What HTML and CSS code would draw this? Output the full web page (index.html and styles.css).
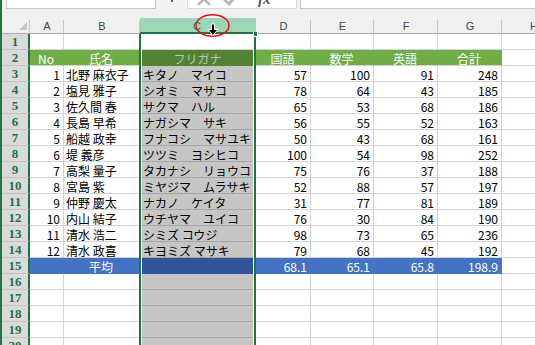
FILE: index.html
```html
<!DOCTYPE html>
<html lang="ja">
<head>
  <meta charset="UTF-8" />
  <meta name="viewport" content="width=device-width, initial-scale=1.0"/>
  <title>成績一覧</title>
  <link rel="stylesheet" href="styles.css">
</head>
<body>

  <div class="formula-bar">
    <div class="name-box">C1</div>
    <span class="bar-grip"></span>
    <div class="bar-buttons">
      <svg class="bar-icon" width="16" height="16" viewBox="0 0 16 16"><path d="M2 2 L14 14 M14 2 L2 14" stroke="#b4b4b4" stroke-width="2.4" fill="none"/></svg>
      <svg class="bar-icon" width="16" height="16" viewBox="0 0 16 16"><path d="M1 8 L6 13 L15 3" stroke="#b4b4b4" stroke-width="2.8" fill="none"/></svg>
      <span class="fx">fx</span>
    </div>
    <div class="formula-input"></div>
  </div>

  <div class="sheet-wrap">
    <div class="sheet">
      <!-- column headers -->
      <div class="corner"></div>
      <div class="ch">A</div><div class="ch">B</div><div class="ch ch-sel">C</div><div class="ch">D</div>
      <div class="ch">E</div><div class="ch">F</div><div class="ch">G</div><div class="ch">H</div>

      <div class="rh">1</div>
      <div class="c"></div><div class="c"></div><div class="c active"></div><div class="c"></div><div class="c"></div><div class="c"></div><div class="c"></div><div class="c"></div>

      <div class="rh">2</div>
      <div class="c hd">No</div><div class="c hd">氏名</div><div class="c hd sel">フリガナ</div><div class="c hd">国語</div><div class="c hd">数学</div><div class="c hd">英語</div><div class="c hd">合計</div><div class="c"></div>

      <div class="rh">3</div>
      <div class="c num">1</div><div class="c">北野 麻衣子</div><div class="c sel">キタノ　マイコ</div><div class="c num">57</div><div class="c num">100</div><div class="c num">91</div><div class="c num">248</div><div class="c"></div>

      <div class="rh">4</div>
      <div class="c num">2</div><div class="c">塩見 雅子</div><div class="c sel">シオミ　マサコ</div><div class="c num">78</div><div class="c num">64</div><div class="c num">43</div><div class="c num">185</div><div class="c"></div>

      <div class="rh">5</div>
      <div class="c num">3</div><div class="c">佐久間 春</div><div class="c sel">サクマ　ハル</div><div class="c num">65</div><div class="c num">53</div><div class="c num">68</div><div class="c num">186</div><div class="c"></div>

      <div class="rh">6</div>
      <div class="c num">4</div><div class="c">長島 早希</div><div class="c sel">ナガシマ　サキ</div><div class="c num">56</div><div class="c num">55</div><div class="c num">52</div><div class="c num">163</div><div class="c"></div>

      <div class="rh">7</div>
      <div class="c num">5</div><div class="c">船越 政幸</div><div class="c sel">フナコシ　マサユキ</div><div class="c num">50</div><div class="c num">43</div><div class="c num">68</div><div class="c num">161</div><div class="c"></div>

      <div class="rh">8</div>
      <div class="c num">6</div><div class="c">堤 義彦</div><div class="c sel">ツツミ　ヨシヒコ</div><div class="c num">100</div><div class="c num">54</div><div class="c num">98</div><div class="c num">252</div><div class="c"></div>

      <div class="rh">9</div>
      <div class="c num">7</div><div class="c">高梨 量子</div><div class="c sel">タカナシ　リョウコ</div><div class="c num">75</div><div class="c num">76</div><div class="c num">37</div><div class="c num">188</div><div class="c"></div>

      <div class="rh">10</div>
      <div class="c num">8</div><div class="c">宮島 紫</div><div class="c sel">ミヤジマ　ムラサキ</div><div class="c num">52</div><div class="c num">88</div><div class="c num">57</div><div class="c num">197</div><div class="c"></div>

      <div class="rh">11</div>
      <div class="c num">9</div><div class="c">仲野 慶太</div><div class="c sel">ナカノ　ケイタ</div><div class="c num">31</div><div class="c num">77</div><div class="c num">81</div><div class="c num">189</div><div class="c"></div>

      <div class="rh">12</div>
      <div class="c num">10</div><div class="c">内山 結子</div><div class="c sel">ウチヤマ　ユイコ</div><div class="c num">76</div><div class="c num">30</div><div class="c num">84</div><div class="c num">190</div><div class="c"></div>

      <div class="rh">13</div>
      <div class="c num">11</div><div class="c">清水 浩二</div><div class="c sel">シミズ コウジ</div><div class="c num">98</div><div class="c num">73</div><div class="c num">65</div><div class="c num">236</div><div class="c"></div>

      <div class="rh">14</div>
      <div class="c num">12</div><div class="c">清水 政喜</div><div class="c sel">キヨミズ マサキ</div><div class="c num">79</div><div class="c num">68</div><div class="c num">45</div><div class="c num">192</div><div class="c"></div>

      <div class="rh">15</div>
      <div class="c avg"></div><div class="c avg ctr">平均</div><div class="c avg sel"></div><div class="c avg num">68.1</div><div class="c avg num">65.1</div><div class="c avg num">65.8</div><div class="c avg num">198.9</div><div class="c"></div>

      <div class="rh">16</div>
      <div class="c"></div><div class="c"></div><div class="c sel"></div><div class="c"></div><div class="c"></div><div class="c"></div><div class="c"></div><div class="c"></div>
      <div class="rh">17</div>
      <div class="c"></div><div class="c"></div><div class="c sel"></div><div class="c"></div><div class="c"></div><div class="c"></div><div class="c"></div><div class="c"></div>
      <div class="rh">18</div>
      <div class="c"></div><div class="c"></div><div class="c sel"></div><div class="c"></div><div class="c"></div><div class="c"></div><div class="c"></div><div class="c"></div>
      <div class="rh">19</div>
      <div class="c"></div><div class="c"></div><div class="c sel"></div><div class="c"></div><div class="c"></div><div class="c"></div><div class="c"></div><div class="c"></div>
      <div class="rh">20</div>
      <div class="c"></div><div class="c"></div><div class="c sel"></div><div class="c"></div><div class="c"></div><div class="c"></div><div class="c"></div><div class="c"></div>
    </div>

    <!-- whole-column selection frame -->
    <div class="col-select"><span class="fill-handle"></span></div>
  </div>

  <!-- red ring and the column-select pointer -->
  <svg class="ring" width="38" height="26" viewBox="0 0 38 26">
    <ellipse cx="18.5" cy="12.5" rx="16.5" ry="10.8" fill="none" stroke="#e8100e" stroke-width="1.4"/>
  </svg>
  <svg class="pointer" width="12" height="14" viewBox="0 0 12 14">
    <path d="M4.5 1 H7.5 V6.5 H11 L6 12.5 L1 6.5 H4.5 Z" fill="#000" stroke="#fff" stroke-width="1"/>
  </svg>

</body>
</html>
```

FILE: styles.css
```css
body {
    margin: 0;
    width: 535px;
    height: 345px;
    overflow: hidden;
    box-sizing: border-box;
    border-left: 2px solid #217346;
    background-color: #f0f0f0;
    font-family: "Noto Sans CJK JP", sans-serif;
    font-size: 12px;
    color: #000;
}

/* formula bar, only its lower edge shows */
.formula-bar {
    display: flex;
    align-items: flex-end;
    height: 9px;
    overflow: hidden;
    background-color: #f3f3f3;
}

.name-box,
.bar-buttons,
.formula-input {
    box-sizing: border-box;
    height: 20px;
    flex-shrink: 0;
    background-color: #fff;
    border: 1px solid #c6c6c6;
}

.name-box {
    width: 150px;
    margin-left: 4px;
    padding: 0 0 0 5px;
    font-family: "Liberation Sans", sans-serif;
    line-height: 12px;
    color: #333;
}

.bar-grip {
    align-self: flex-start;
    width: 2px;
    height: 2px;
    margin-left: 15px;
    background-color: #6a6a6a;
}

.bar-buttons {
    width: 110px;
    margin-left: 14px;
    display: flex;
    align-items: center;
    gap: 11px;
    padding-left: 8px;
    border-color: #d8d8d8;
}

.fx {
    font-family: "Liberation Serif", serif;
    font-style: italic;
    font-weight: bold;
    font-size: 15px;
    color: #555;
    margin-left: 8px;
}

.formula-input {
    flex-grow: 1;
    margin-left: 3px;
    margin-right: -4px;
}

/* worksheet grid */
.sheet-wrap {
    position: relative;
    margin-top: 9px;
}

.sheet {
    display: grid;
    grid-template-columns: 28px 34px 76px 116px 55px 63px 64px 64px 64px;
    grid-auto-rows: 16px;
}

.corner,
.ch {
    position: relative;
    box-sizing: border-box;
    border-bottom: 1px solid #ababab;
    background-color: #f0f0f0;
}

.corner::before {
    content: "";
    position: absolute;
    right: 3px;
    bottom: 3px;
    width: 8px;
    height: 8px;
    background-color: #c4c4c4;
    clip-path: polygon(100% 0, 100% 100%, 0 100%);
}

.corner::after,
.ch::after {
    content: "";
    position: absolute;
    right: 0;
    top: 2px;
    bottom: 0;
    width: 1px;
    background-color: #c6c6c6;
}

.ch {
    text-align: center;
    font-family: "Liberation Sans", sans-serif;
    font-size: 11px;
    line-height: 16px;
    color: #444;
}

.ch-sel {
    background-color: #9fd5b7;
    color: #217346;
    border-bottom: 2px solid #217346;
    text-indent: -2px;
}

.ch-sel::after {
    display: none;
}

.rh {
    box-sizing: border-box;
    background-color: #dadada;
    border-right: 2px solid #217346;
    border-bottom: 1px solid #c3c3c3;
    text-align: center;
    font-family: "Liberation Serif", serif;
    font-weight: bold;
    font-size: 13px;
    line-height: 16px;
    color: #217346;
}

.c {
    box-sizing: border-box;
    background-color: #fff;
    border-right: 1px solid #d4d4d4;
    border-bottom: 1px solid #d4d4d4;
    padding: 0 3px 0 2px;
    line-height: 17px;
    white-space: nowrap;
    overflow: hidden;
}

.num {
    text-align: right;
}

.ctr {
    text-align: center;
}

.sel {
    background-color: #c6c6c6;
    border-bottom-color: #a6a6a6;
    padding-left: 3px;
}

.c.active {
    background-color: #fff;
    border-bottom-color: #d4d4d4;
}

/* title row */
.hd {
    background-color: #70ad47;
    border-right-color: #70ad47;
    color: #fff;
    text-align: center;
}

.hd.sel {
    background-color: #548235;
    border-bottom-color: #548235;
    color: #b8c9ad;
}

/* average row */
.avg {
    background-color: #4472c4;
    border-right-color: #4472c4;
    border-bottom-color: #4472c4;
    color: #fff;
}

.avg.sel {
    background-color: #2f5597;
    border-bottom-color: #2f5597;
}

.col-select {
    position: absolute;
    left: 137px;
    top: 16px;
    width: 117px;
    height: 400px;
    box-sizing: border-box;
    border-left: 2px solid #217346;
    border-right: 2px solid #217346;
    box-shadow: inset 1px 0 0 #fff, inset -1px 0 0 #fff;
}

.fill-handle {
    position: absolute;
    right: -4px;
    top: -2px;
    width: 5px;
    height: 5px;
    box-sizing: border-box;
    background-color: #217346;
    border: 1px solid #fff;
    border-top: none;
}

.ring {
    position: absolute;
    left: 194px;
    top: 13px;
}

.pointer {
    position: absolute;
    left: 207px;
    top: 23px;
}
```
